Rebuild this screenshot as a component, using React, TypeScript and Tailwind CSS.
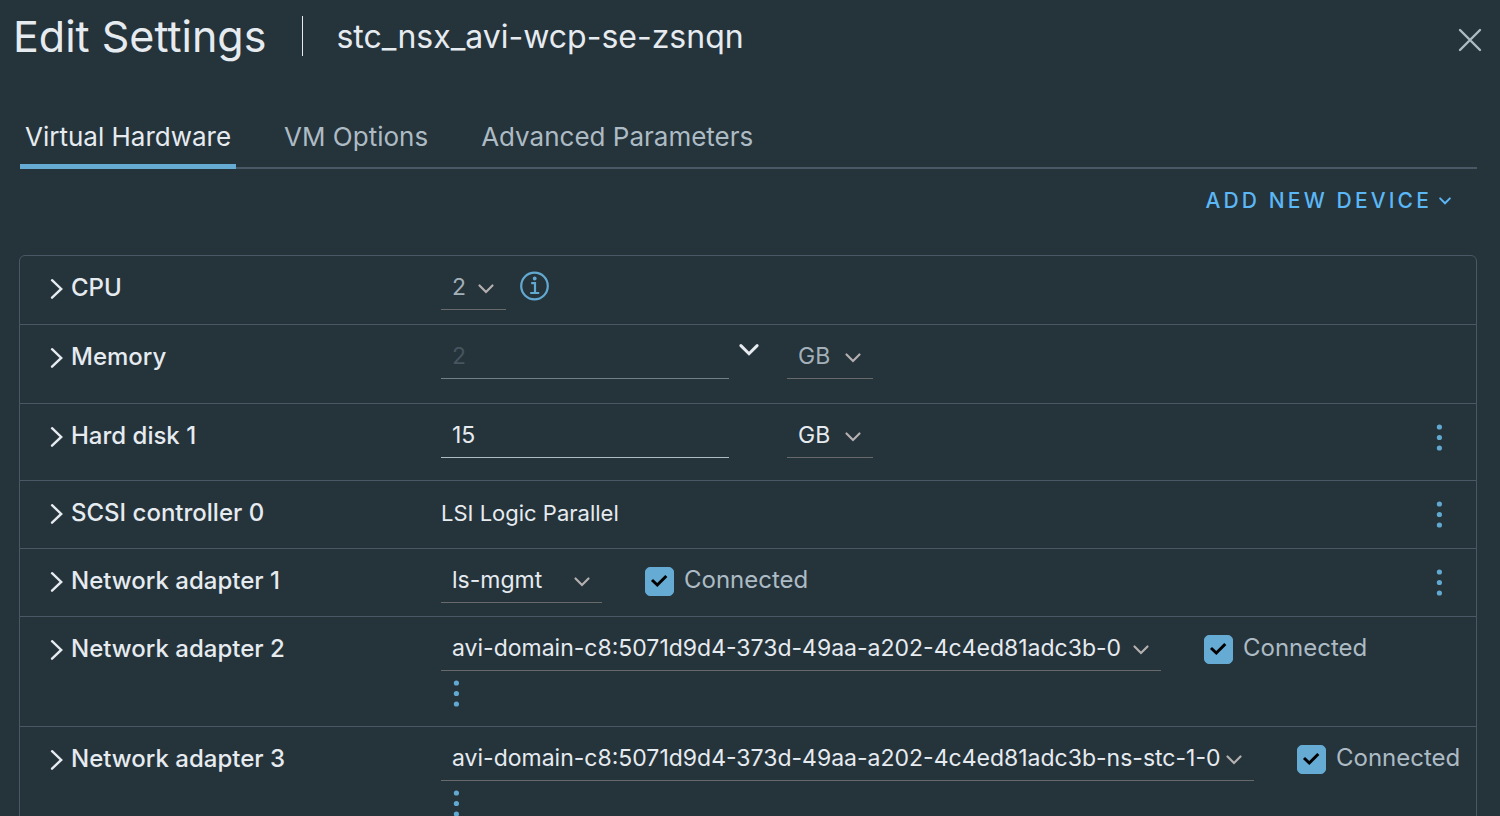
import { useState, type ReactNode } from "react";

type Stroke = { d: string; className: string; width?: number };

function Chevron({ d, className, width = 2 }: Stroke) {
  return (
    <svg viewBox="0 0 24 24" aria-hidden="true" fill="none" stroke="currentColor" strokeWidth={width} strokeLinecap="round" className={className}>
      <path d={d} />
    </svg>
  );
}

const DOWN = "M5.5 8.5 12 15 18.5 8.5";

type SelectProps = { label: string; options: string[]; width: string; muted?: boolean; disabled?: boolean };

function Select({ label, options, width, muted, disabled }: SelectProps) {
  return (
    <span className={`relative inline-flex h-9 shrink-0 border-b border-[#68696b] ${width}`}>
      <select
        aria-label={label}
        disabled={disabled}
        className={`w-full appearance-none bg-transparent pr-6 pb-[9px] pl-[11px] text-[23px] leading-[26px] outline-none ${muted ? "text-[#a3b0b9]" : "text-[#e6ebf0]"}`}
      >
        {options.map((o) => (
          <option key={o}>{o}</option>
        ))}
      </select>
      <span className="pointer-events-none absolute top-[3px] right-2 text-[#b3b0af]">
        <Chevron d={DOWN} width={2.2} className="size-6" />
      </span>
    </span>
  );
}

function Connected({ id }: { id: string }) {
  const [on, setOn] = useState(true);
  return (
    <label htmlFor={id} className="ml-[43px] flex h-9 shrink-0 cursor-pointer items-start gap-[10px] text-[24px] leading-[26px] text-[#adbbc4]">
      <span className="relative flex size-[29px]">
        <input
          id={id}
          type="checkbox"
          checked={on}
          onChange={(e) => setOn(e.target.checked)}
          className="size-[29px] appearance-none rounded-[5px] border border-[#65abd4] checked:bg-[#65abd4]"
        />
        {on && (
          <svg viewBox="0 0 29 29" aria-hidden="true" className="pointer-events-none absolute inset-0 size-[29px]">
            <path d="M7 13 12.3 18 21.3 9" fill="none" stroke="#000" strokeWidth="3" />
          </svg>
        )}
      </span>
      Connected
    </label>
  );
}

function MenuButton({ name }: { name: string }) {
  return (
    <button type="button" aria-label={`${name} actions`} className="flex h-[30px] w-[30px] items-center justify-center text-[#62a9d2]">
      <svg viewBox="0 0 6 27" fill="currentColor" aria-hidden="true" className="h-[27px] w-1.5">
        <circle cx="3.4" cy="3" r="2.6" />
        <circle cx="3.4" cy="13.5" r="2.6" />
        <circle cx="3.4" cy="24" r="2.6" />
      </svg>
    </button>
  );
}

type RowProps = { name: string; children: ReactNode; pad?: string; menu?: "right" | "below" };

function Row({ name, children, pad = "pb-[13px]", menu }: RowProps) {
  return (
    <li className={`flex border-t border-[#485864] pt-[18px] first:border-t-0 ${pad}`}>
      <div className="w-[421px] shrink-0 pl-[27px]">
        <button type="button" className="flex h-7 items-center gap-[2px] text-[24px] font-medium text-[#e6ebf0]">
          <Chevron d="M5.5 3.5 15.5 13 5.5 22.5" width={2.6} className="size-[22px]" />
          {name}
        </button>
      </div>
      <div className="min-w-0 grow">
        <div className="flex min-h-9 items-start">{children}</div>
        {menu === "below" && (
          <div className="pt-[7px]">
            <MenuButton name={name} />
          </div>
        )}
      </div>
      {menu === "right" && (
        <div className="mr-[22px]">
          <MenuButton name={name} />
        </div>
      )}
    </li>
  );
}

const TABS = ["Virtual Hardware", "VM Options", "Advanced Parameters"];

export default function App() {
  const [tab, setTab] = useState(TABS[0]);
  return (
    <div className="flex h-screen flex-col overflow-hidden bg-[#25333b] font-['Inter',sans-serif] text-[22px] text-[#e6ebf0]">
      <header className="flex h-[72px] shrink-0 items-center pr-[17px] pl-[13px]">
        <h1 className="text-[43px] leading-none">Edit Settings</h1>
        <span className="mr-[33px] ml-9 h-10 w-px bg-[#e6ebf0]" />
        <h2 className="pt-0.5 text-[32px] leading-none">stc_nsx_avi-wcp-se-zsnqn</h2>
        <button type="button" aria-label="Close" className="mt-1.5 ml-auto text-[#adbbc4]">
          <svg viewBox="0 0 26 26" fill="none" stroke="currentColor" strokeWidth="2.4" strokeLinecap="round" className="size-[26px]">
            <path d="M3 4 23 24M23 4 3 24" />
          </svg>
        </button>
      </header>

      <nav role="tablist" className="mr-[23px] ml-5 flex h-[97px] shrink-0 items-end gap-[43px] shadow-[inset_0_-2px_0_#485864]">
        {TABS.map((t) => (
          <button
            key={t}
            type="button"
            role="tab"
            aria-selected={t === tab}
            onClick={() => setTab(t)}
            className={`h-[50px] border-b-[5px] px-[5px] pb-2.5 text-[26px] leading-none ${
              t === tab ? "border-[#65abd4] text-[#e6ebf0]" : "border-transparent text-[#adbbc4]"
            }`}
          >
            {t}
          </button>
        ))}
      </nav>

      <div className="flex h-[86px] shrink-0 justify-end pt-4 pr-[46px]">
        <button type="button" className="flex h-8 items-center gap-1 text-[21px] font-medium tracking-[0.15em] text-[#5bb7f5]">
          ADD NEW DEVICE
          <Chevron d={DOWN} width={2.6} className="size-[18px]" />
        </button>
      </div>

      <main className="mr-[23px] ml-[19px] min-h-0 grow overflow-y-auto [scrollbar-width:none]">
        <ul className="rounded-md border border-[#485864]">
          <Row name="CPU" pad="pb-[14px]">
            <Select label="CPU count" options={["2", "1", "4"]} width="w-[65px]" muted />
            <button type="button" aria-label="CPU information" className="ml-[14px] text-[#62a9d2]">
              <svg viewBox="0 0 30 30" fill="none" stroke="currentColor" strokeWidth="2.2" className="-mt-[3px] size-[30px]">
                <circle cx="14.5" cy="15" r="13.3" />
                <path d="M11.2 12.2H15V22M10.2 22H19.2" />
                <circle cx="14.7" cy="7.5" r="1.9" fill="currentColor" stroke="none" />
              </svg>
            </button>
          </Row>
          <Row name="Memory" pad="pb-6">
            <input
              aria-label="Memory size"
              defaultValue="2"
              disabled
              className="h-9 w-72 border-b border-[#6f8089] bg-transparent pb-[9px] pl-[11px] text-[23px] leading-[26px] text-[#46555e]"
            />
            <button type="button" aria-label="Memory presets" className="-mt-2 ml-[5px] text-[#e6ebf0]">
              <Chevron d={DOWN} width={2.4} className="size-[30px]" />
            </button>
            <span className="ml-[23px] flex">
              <Select label="Memory unit" options={["GB", "MB"]} width="w-[86px]" muted disabled />
            </span>
          </Row>
          <Row name="Hard disk 1" pad="pb-[22px]" menu="right">
            <input
              aria-label="Hard disk size"
              defaultValue="15"
              className="mr-[58px] h-9 w-72 border-b border-[#adbbc4] bg-transparent pb-[9px] pl-[11px] text-[23px] leading-[26px] outline-none"
            />
            <Select label="Hard disk unit" options={["GB", "MB", "TB"]} width="w-[86px]" />
          </Row>
          <Row name="SCSI controller 0" menu="right">
            <span className="leading-7">LSI Logic Parallel</span>
          </Row>
          <Row name="Network adapter 1" menu="right">
            <Select label="Network adapter 1 network" options={["ls-mgmt"]} width="w-[161px]" />
            <Connected id="net1" />
          </Row>
          <Row name="Network adapter 2" pad="pb-[18px]" menu="below">
            <Select label="Network adapter 2 network" options={["avi-domain-c8:5071d9d4-373d-49aa-a202-4c4ed81adc3b-0"]} width="w-[720px]" />
            <Connected id="net2" />
          </Row>
          <Row name="Network adapter 3" pad="pb-[18px]" menu="below">
            <Select label="Network adapter 3 network" options={["avi-domain-c8:5071d9d4-373d-49aa-a202-4c4ed81adc3b-ns-stc-1-0"]} width="w-[813px]" />
            <Connected id="net3" />
          </Row>
        </ul>
      </main>
    </div>
  );
}
